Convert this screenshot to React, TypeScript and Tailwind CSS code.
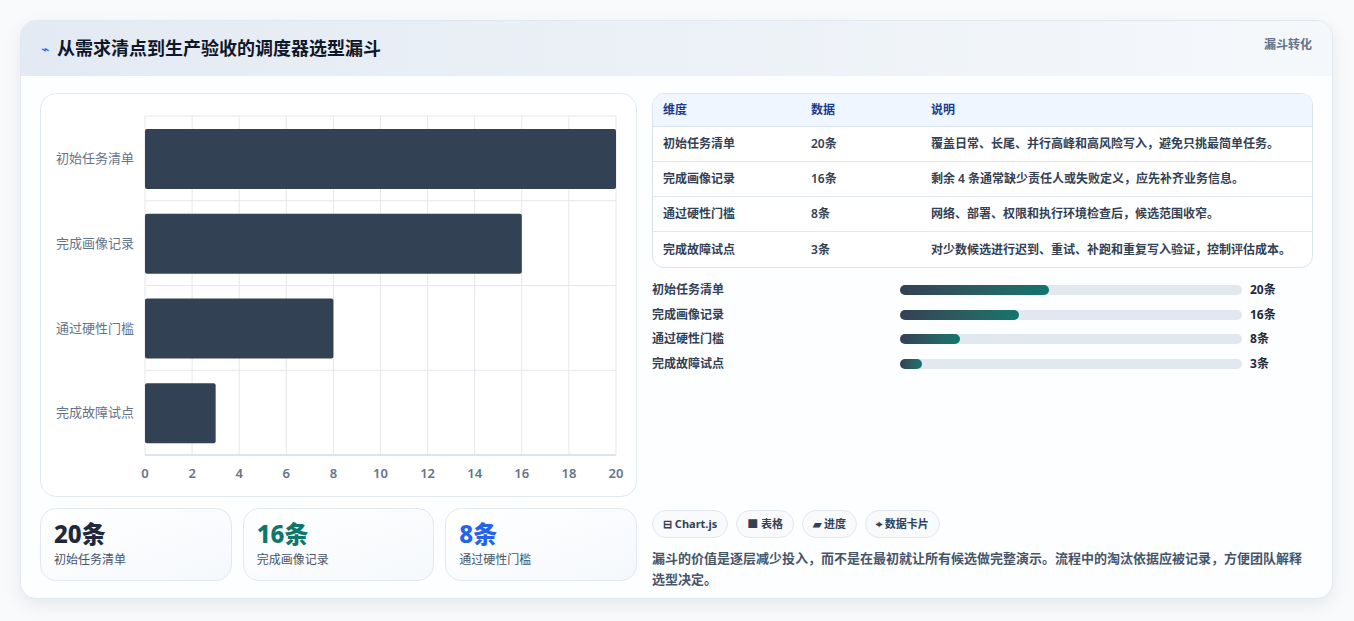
const rows = [
  { name: "初始任务清单", v: 20, note: "覆盖日常、长尾、并行高峰和高风险写入，避免只挑最简单任务。" },
  { name: "完成画像记录", v: 16, note: "剩余 4 条通常缺少责任人或失败定义，应先补齐业务信息。" },
  { name: "通过硬性门槛", v: 8, note: "网络、部署、权限和执行环境检查后，候选范围收窄。" },
  { name: "完成故障试点", v: 3, note: "对少数候选进行迟到、重试、补跑和重复写入验证，控制评估成本。" },
];

function Chart() {
  const x0 = 104, x1 = 575, y0 = 22, rowH = 84.75;
  const sx = (v: number) => x0 + ((x1 - x0) * v) / 20;
  return (
    <svg width="596" height="402" className="block">
      {Array.from({ length: 11 }, (_, i) => (
        <line key={i} x1={sx(i * 2)} x2={sx(i * 2)} y1={y0} y2={361} stroke="#e5e7eb" />
      ))}
      {[0, 1, 2, 3, 4].map((i) => (
        <line key={i} x1={x0} x2={x1} y1={y0 + i * rowH} y2={y0 + i * rowH} stroke="#e5e7eb" />
      ))}
      <line x1={x0} x2={x1} y1={361} y2={361} stroke="#cbd5e1" />
      {rows.map((r, i) => (
        <g key={r.name}>
          <rect x={x0} y={y0 + i * rowH + 13} width={sx(r.v) - x0} height={60} rx={2} fill="#334155" />
          <text x={93} y={y0 + i * rowH + 47} textAnchor="end" fontSize="13" fill="#64748b">{r.name}</text>
        </g>
      ))}
      {Array.from({ length: 11 }, (_, i) => (
        <text key={i} x={sx(i * 2)} y={384} textAnchor="middle" fontSize="13" fontWeight="600" fill="#64748b">{i * 2}</text>
      ))}
    </svg>
  );
}

export default function App() {
  const font = { fontFamily: '"Noto Sans", "Noto Sans CJK SC", sans-serif' };
  return (
    <div className="w-[1354px] h-[621px] bg-[#f8fafc] pt-5 px-5" style={font}>
      <div className="w-[1313px] h-[579px] rounded-2xl bg-[#fdfeff] border border-[#e2e8f0] shadow-[0_6px_18px_rgba(15,23,42,0.08)] overflow-hidden flex flex-col">
        <div className="h-[55px] shrink-0 flex items-start justify-between px-5 bg-gradient-to-r from-[#e3eaf3] to-[#f5f8fb]">
          <div className="flex items-center gap-2 h-[55px]">
            <span className="text-[#2563eb] text-sm">⌁</span>
            <h1 className="text-[18px] font-bold text-[#0f172a]">从需求清点到生产验收的调度器选型漏斗</h1>
          </div>
          <span className="text-xs font-bold text-[#64748b] mt-[16px]">漏斗转化</span>
        </div>
        <div className="flex gap-[15px] px-[19px] pt-[17px]">
          <div className="w-[597px] flex flex-col gap-[11px]">
            <div className="h-[404px] rounded-2xl border border-[#e2e8f0] bg-white">
              <Chart />
            </div>
            <div className="grid grid-cols-3 gap-[11px]">
              {[
                ["20条", "初始任务清单", "text-[#1e293b]"],
                ["16条", "完成画像记录", "text-[#0f766e]"],
                ["8条", "通过硬性门槛", "text-[#2563eb]"],
              ].map(([n, l, c]) => (
                <div key={l} className="h-[73px] rounded-2xl border border-[#e2e8f0] bg-gradient-to-br from-white to-[#f5f8fc] px-[13px] pt-[9px]">
                  <div className={`text-[24px] font-extrabold leading-8 ${c}`}>{n}</div>
                  <div className="text-xs text-[#475569] mt-[2px]">{l}</div>
                </div>
              ))}
            </div>
          </div>
          <div className="w-[662px] flex flex-col">
            <div className="rounded-xl border border-[#dbe4ee] overflow-hidden bg-white">
              <div className="flex h-[33px] items-center bg-[#eff6ff] border-b border-[#dbe4ee] text-xs font-bold text-[#1e3a8a]">
                <span className="w-[158px] pl-[10px]">维度</span>
                <span className="w-[120px]">数据</span>
                <span>说明</span>
              </div>
              {rows.map((r, i) => (
                <div key={r.name} className={`flex h-[35px] items-center text-xs font-semibold text-[#334155] ${i < 3 ? "border-b border-[#e2e8f0]" : ""}`}>
                  <span className="w-[158px] pl-[10px]">{r.name}</span>
                  <span className="w-[120px]">{r.v}条</span>
                  <span>{r.note}</span>
                </div>
              ))}
            </div>
            <div className="flex flex-col mt-[10px]">
              {rows.map((r) => (
                <div key={r.name} className="flex items-center h-[24.6px] text-xs font-semibold text-[#334155]">
                  <span className="w-[248px]">{r.name}</span>
                  <div className="w-[342px] h-[10px] rounded-full bg-[#e2e8f0]">
                    <div className="h-full rounded-full bg-gradient-to-r from-[#334155] to-[#0f766e]" style={{ width: `${(r.v / 20) * 43.5}%` }} />
                  </div>
                  <span className="ml-2 font-bold text-[#1e293b]">{r.v}条</span>
                </div>
              ))}
            </div>
            <div className="flex gap-2 mt-[134px]">
              {["⊟ Chart.js", "■ 表格", "▰ 进度", "⌖ 数据卡片"].map((t) => (
                <span key={t} className="h-[28px] px-[10px] flex items-center rounded-full border border-[#e2e8f0] bg-[#f8fafc] text-[11px] font-bold text-[#334155]">{t}</span>
              ))}
            </div>
            <p className="mt-[10px] text-[13px] leading-[21px] font-semibold text-[#475569]">
              漏斗的价值是逐层减少投入，而不是在最初就让所有候选做完整演示。流程中的淘汰依据应被记录，方便团队解释选型决定。
            </p>
          </div>
        </div>
      </div>
    </div>
  );
}
